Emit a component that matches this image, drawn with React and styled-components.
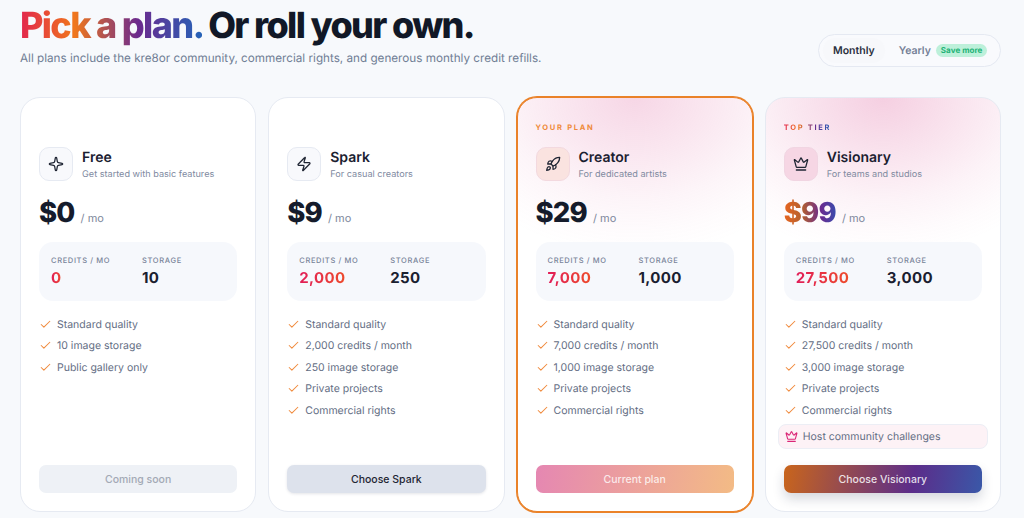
import React from "react"
import styled, { createGlobalStyle, css } from "styled-components"
import { Check, Crown, Rocket, Sparkle, Zap } from "lucide-react"

const GlobalStyle = createGlobalStyle`
  html, body {
    margin: 0;
    padding: 0;
    height: 518px;
    overflow: hidden;
    background: #f7f9fc;
    font-family: Inter, "Liberation Sans", sans-serif;
    text-rendering: geometricPrecision;
  }
  * {
    box-sizing: border-box;
  }
`

const brand = "linear-gradient(90deg, #e2264d 0%, #f0771c 30%, #6b2a8e 65%, #2563b8 100%)"

const gradientText = css`
  background: ${brand};
  -webkit-background-clip: text;
  background-clip: text;
  color: transparent;
`

const Page = styled.div`
  padding: 0 23px 0 20px;
`

const Header = styled.header`
  display: flex;
  align-items: flex-start;
  justify-content: space-between;
  height: 97px;
  padding-top: 5px;
`

const Heading = styled.h1`
  margin: 0;
  font-size: 36px;
  line-height: 40px;
  font-weight: 800;
  letter-spacing: -1.65px;
  color: #111827;
`

const Accent = styled.span`
  ${gradientText}
`

const Subtitle = styled.p`
  margin: 5px 0 0;
  font-size: 11.7px;
  line-height: 16px;
  color: #6f7d94;
`

const Toggle = styled.div`
  display: flex;
  align-items: center;
  width: 183px;
  height: 33px;
  margin-top: 29px;
  padding: 0 14px 0 4px;
  border: 1px solid #e5e9f2;
  border-radius: 17px;
  background: #f9fafd;
`

const ToggleOption = styled.span`
  display: flex;
  align-items: center;
  height: 25px;
  padding: 0 ${p => (p.$active ? "10px" : "0")};
  margin-right: ${p => (p.$active ? "14px" : "5px")};
  border-radius: 13px;
  font-size: 10.5px;
  font-weight: 600;
  color: ${p => (p.$active ? "#2b3040" : "#747f96")};
  background: ${p => (p.$active ? "#f7f8fb" : "transparent")};
`

const SaveBadge = styled.span`
  padding: 2px 5px;
  border-radius: 7px;
  font-size: 8px;
  line-height: 9px;
  font-weight: 700;
  letter-spacing: 0.05px;
  white-space: nowrap;
  color: #22b377;
  background: #bdf0da;
`

const Grid = styled.div`
  display: grid;
  grid-template-columns: repeat(4, 1fr);
  gap: 12px;
`

const Card = styled.section`
  position: relative;
  display: flex;
  flex-direction: column;
  height: 415px;
  padding: 24px 18px 18px;
  border: 1px solid #e6eaf2;
  border-radius: 20px;
  overflow: hidden;
  background: ${p =>
    p.$glow
      ? `radial-gradient(ellipse 88% 38% at 50% 0%, rgba(225, 110, 165, ${p.$glow}) 0%, rgba(225, 110, 165, ${p.$glow * 0.6}) 35%, rgba(225, 110, 165, ${p.$glow * 0.25}) 65%, rgba(225, 110, 165, ${p.$glow * 0.08}) 85%, rgba(255, 255, 255, 0) 100%), #fff`
      : "#fff"};
  ${p =>
    p.$current &&
    css`
      border-color: #ea8229;
      box-shadow: 0 0 0 1px #ea8229;
    `}
`

const Tag = styled.div`
  height: 12px;
  margin-bottom: 13px;
  font-size: 7.5px;
  line-height: 12px;
  font-weight: 700;
  letter-spacing: 1.7px;
  color: #ef8a3a;
  ${p =>
    p.$gradient &&
    css`
      width: fit-content;
      ${gradientText}
    `}
`

const PlanHead = styled.div`
  display: flex;
  align-items: flex-start;
  gap: 9px;
`

const IconBox = styled.div`
  display: flex;
  align-items: center;
  justify-content: center;
  width: 34px;
  height: 34px;
  border: 1px solid ${p => p.$border || "#e6eaf2"};
  border-radius: 10px;
  color: #1f2533;
  background: ${p => p.$bg || "#f8f9fc"};
`

const PlanName = styled.div`
  margin-top: 1.5px;
  font-size: 14px;
  line-height: 18px;
  font-weight: 600;
  color: #1a2030;
`

const PlanBlurb = styled.div`
  margin-top: 1.5px;
  font-size: 9.15px;
  line-height: 14px;
  color: #808a9f;
`

const PriceRow = styled.div`
  display: flex;
  align-items: baseline;
  gap: 6px;
  height: 38px;
  margin-top: 11px;
`

const Price = styled.span`
  font-size: 27.5px;
  line-height: 38px;
  font-weight: 800;
  letter-spacing: -0.8px;
  color: #151b2b;
  ${p =>
    p.$gradient &&
    css`
      background: linear-gradient(90deg, #e8651f 0%, #b3602f 35%, #6b2a8e 70%, #3a4cae 100%);
      -webkit-background-clip: text;
      background-clip: text;
      color: transparent;
    `}
`

const Per = styled.span`
  font-size: 11px;
  color: #7d879b;
`

const Stats = styled.div`
  display: grid;
  grid-template-columns: 91px 1fr;
  align-content: center;
  height: 59px;
  margin-top: 11px;
  padding: 0 12px 2px;
  border-radius: 14px;
  background: rgba(245, 247, 251, 0.85);
`

const StatLabel = styled.div`
  font-size: 7.5px;
  line-height: 12px;
  font-weight: 500;
  letter-spacing: 0.65px;
  color: #778298;
`

const StatValue = styled.div`
  margin-top: 2px;
  font-size: 15px;
  line-height: 18px;
  font-weight: 700;
  letter-spacing: 0.4px;
  color: #1a2030;
  ${p =>
    p.$accent &&
    css`
      width: fit-content;
      background: linear-gradient(90deg, #e11d58, #ee4b2b);
      -webkit-background-clip: text;
      background-clip: text;
      color: transparent;
    `}
`

const Features = styled.ul`
  margin: 12.6px 0 0;
  padding: 0;
  list-style: none;
`

const Feature = styled.li`
  display: flex;
  align-items: center;
  gap: 5px;
  height: 21.5px;
  font-size: 10.5px;
  color: #646e84;
  svg {
    color: #f08a3c;
  }
`

const Perk = styled.div`
  display: flex;
  align-items: center;
  gap: 5px;
  height: 25px;
  margin: 3.4px -6px 0;
  padding: 0 6px;
  border: 1px solid #eceef5;
  border-radius: 8px;
  font-size: 10.5px;
  color: #646e84;
  background: #fdf2f6;
  svg {
    color: #db2777;
  }
`

const buttonKinds = {
  disabled: css`
    color: #a3a9b5;
    background: #eef1f6;
  `,
  plain: css`
    color: #1f2533;
    background: #dde2ec;
    box-shadow: 0 1px 3px rgba(30, 40, 70, 0.12);
  `,
  current: css`
    color: rgba(255, 255, 255, 0.8);
    background: linear-gradient(100deg, #e587b2, #f3bb85);
  `,
  premium: css`
    color: rgba(255, 255, 255, 0.85);
    background: linear-gradient(100deg, #c9651c 0%, #5b2d8a 65%, #3a58a8 100%);
    box-shadow: 0 6px 12px rgba(30, 40, 70, 0.18);
  `,
}

const PlanButton = styled.button`
  width: 100%;
  height: 28px;
  margin-top: auto;
  flex: none;
  border: 0;
  border-radius: 7px;
  font-family: inherit;
  font-size: 10.5px;
  font-weight: 500;
  ${p => buttonKinds[p.$kind]}
`

const plans = [
  {
    name: "Free",
    blurb: "Get started with basic features",
    price: "$0",
    credits: "0",
    storage: "10",
    icon: Sparkle,
    features: ["Standard quality", "10 image storage", "Public gallery only"],
    button: "Coming soon",
    kind: "disabled",
  },
  {
    name: "Spark",
    blurb: "For casual creators",
    price: "$9",
    credits: "2,000",
    storage: "250",
    icon: Zap,
    features: ["Standard quality", "2,000 credits / month", "250 image storage", "Private projects", "Commercial rights"],
    button: "Choose Spark",
    kind: "plain",
  },
  {
    name: "Creator",
    blurb: "For dedicated artists",
    price: "$29",
    credits: "7,000",
    storage: "1,000",
    icon: Rocket,
    tag: "YOUR PLAN",
    current: true,
    glow: 0.28,
    iconBg: "#fae3e0",
    iconBorder: "#f3d9df",
    features: ["Standard quality", "7,000 credits / month", "1,000 image storage", "Private projects", "Commercial rights"],
    button: "Current plan",
    kind: "current",
  },
  {
    name: "Visionary",
    blurb: "For teams and studios",
    price: "$99",
    credits: "27,500",
    storage: "3,000",
    icon: Crown,
    tag: "TOP TIER",
    gradient: true,
    glow: 0.33,
    iconBg: "#f6d6e4",
    iconBorder: "#f1d5e2",
    features: ["Standard quality", "27,500 credits / month", "3,000 image storage", "Private projects", "Commercial rights"],
    perk: "Host community challenges",
    button: "Choose Visionary",
    kind: "premium",
  },
]

const Plan = ({ plan }) => {
  const Icon = plan.icon
  return (
    <Card $current={plan.current} $glow={plan.glow}>
      <Tag $gradient={plan.gradient}>{plan.tag}</Tag>
      <PlanHead>
        <IconBox $bg={plan.iconBg} $border={plan.iconBorder}>
          <Icon size={16} strokeWidth={1.9} />
        </IconBox>
        <div>
          <PlanName>{plan.name}</PlanName>
          <PlanBlurb>{plan.blurb}</PlanBlurb>
        </div>
      </PlanHead>
      <PriceRow>
        <Price $gradient={plan.gradient}>{plan.price}</Price>
        <Per>/ mo</Per>
      </PriceRow>
      <Stats>
        <StatLabel>CREDITS / MO</StatLabel>
        <StatLabel>STORAGE</StatLabel>
        <StatValue $accent>{plan.credits}</StatValue>
        <StatValue>{plan.storage}</StatValue>
      </Stats>
      <Features>
        {plan.features.map(f => (
          <Feature key={f}>
            <Check size={13} strokeWidth={1.9} />
            {f}
          </Feature>
        ))}
      </Features>
      {plan.perk && (
        <Perk>
          <Crown size={13} strokeWidth={2} />
          {plan.perk}
        </Perk>
      )}
      <PlanButton $kind={plan.kind}>{plan.button}</PlanButton>
    </Card>
  )
}

export default function App() {
  return (
    <Page>
      <GlobalStyle />
      <Header>
        <div>
          <Heading>
            <Accent>Pick a plan.</Accent> Or roll your own.
          </Heading>
          <Subtitle>All plans include the kre8or community, commercial rights, and generous monthly credit refills.</Subtitle>
        </div>
        <Toggle>
          <ToggleOption $active>Monthly</ToggleOption>
          <ToggleOption>Yearly</ToggleOption>
          <SaveBadge>Save more</SaveBadge>
        </Toggle>
      </Header>
      <Grid>
        {plans.map(plan => (
          <Plan key={plan.name} plan={plan} />
        ))}
      </Grid>
    </Page>
  )
}
